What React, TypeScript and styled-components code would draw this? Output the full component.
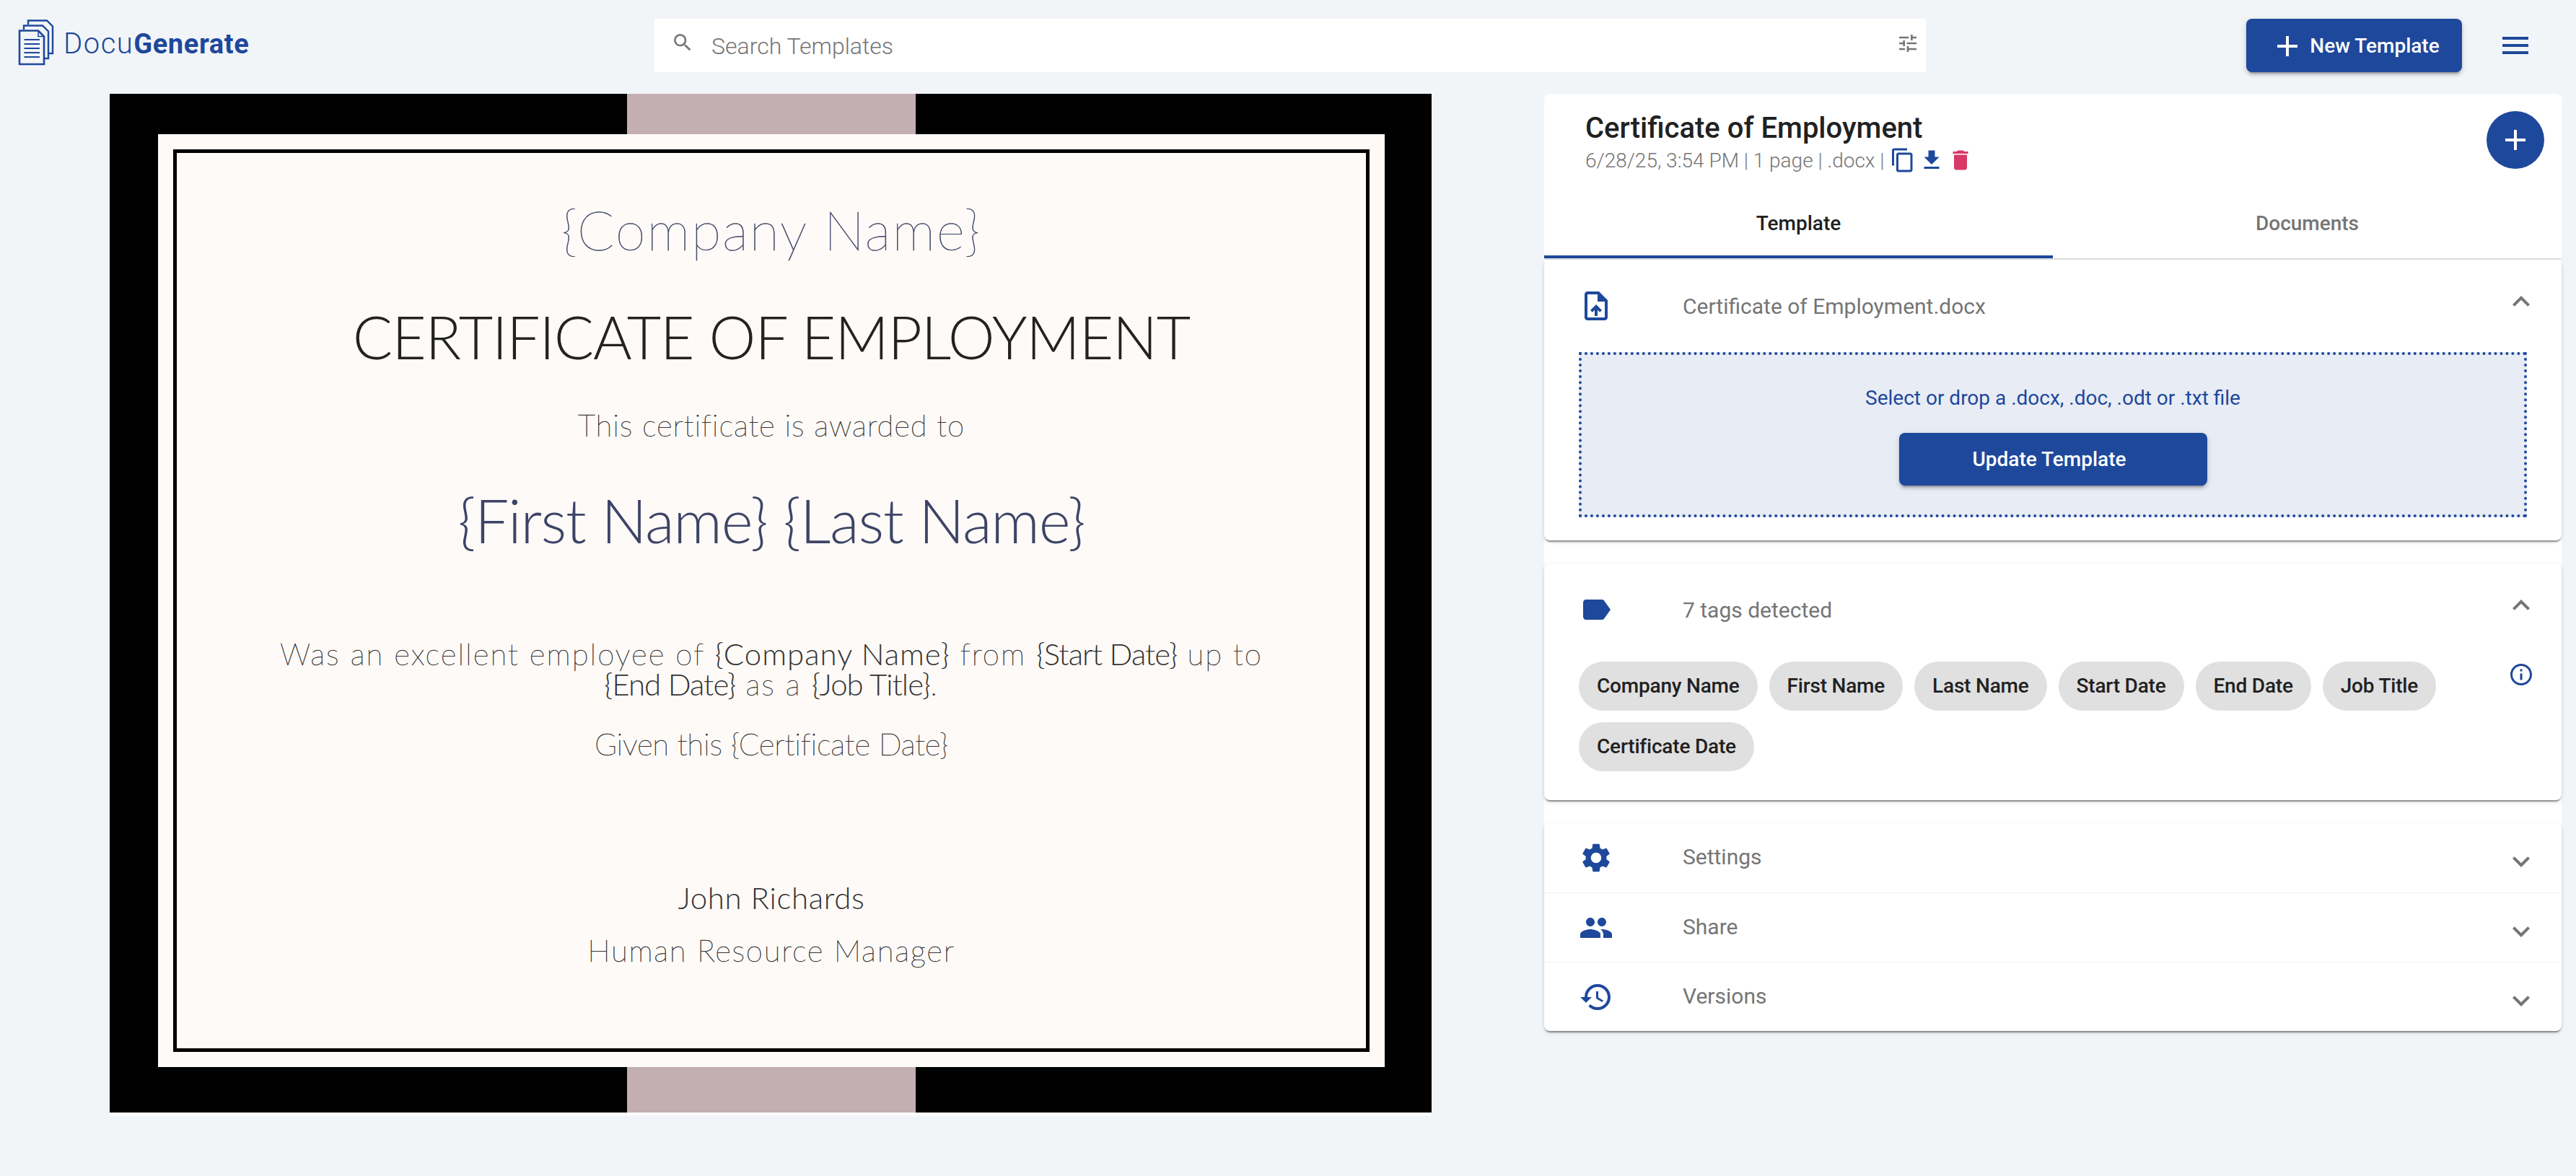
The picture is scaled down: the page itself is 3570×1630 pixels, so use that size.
import React from 'react';
import styled, { createGlobalStyle } from 'styled-components';
import {
  MdAdd, MdMenu, MdSearch, MdTune, MdContentCopy, MdFileDownload, MdDelete, MdUploadFile, MdLabel,
  MdSettings, MdPeople, MdHistory, MdExpandLess, MdExpandMore, MdInfoOutline,
} from 'react-icons/md';

const BLUE = '#1e489b';
const GRAY = '#757575';
const INK = '#212121';
const SLATE = '#3d4467';
const PAGE = '#f2f5f8';

const Global = createGlobalStyle`
  html, body { margin: 0; padding: 0; background: ${PAGE}; }
  body { font-family: Roboto, "Liberation Sans", sans-serif; overflow: hidden; }
  * { box-sizing: border-box; }
`;

const Page = styled.div`
  width: 3570px;
  height: 1630px;
  background: ${PAGE};
  display: flex;
  flex-direction: column;
`;

const Header = styled.header`
  display: flex;
  align-items: center;
  height: 130px;
  padding: 26px 60px 30px 20px;
`;

const Logo = styled.div`
  width: 887px;
  height: 72px;
  flex: none;
  display: flex;
  align-self: flex-start;
  margin-top: -4px;
  gap: 4px;
`;

const LogoText = styled.div`
  display: flex;
  align-items: center;
  padding-top: 6px;
  font-size: 38px;
  line-height: 66px;
  color: ${BLUE};
`;

const LogoThin = styled.span`
  font-weight: 300;
  font-size: 40px;
  letter-spacing: 1.5px;
`;

const LogoBold = styled.span`
  font-weight: 700;
  letter-spacing: 0.6px;
`;

const SearchBar = styled.div`
  width: 1762px;
  height: 74px;
  flex: none;
  background: #fff;
  display: flex;
  align-items: center;
  padding: 0 9px 0 23px;
  color: ${GRAY};
`;

const SearchIcon = styled(MdSearch)`
  width: 32px;
  height: 32px;
  flex: none;
  margin-top: -8px;
`;

const Placeholder = styled.span`
  flex: 1;
  margin: 2px 0 0 24px;
  font-size: 32px;
  font-weight: 300;
  color: ${GRAY};
`;

const TuneIcon = styled(MdTune)`
  width: 32px;
  height: 32px;
  flex: none;
  margin-top: -6px;
`;

const HeaderActions = styled.div`
  margin-left: auto;
  display: flex;
  align-items: center;
  gap: 50px;
`;

const PrimaryButton = styled.button`
  border: 0;
  background: ${BLUE};
  color: #fff;
  font-family: Roboto, sans-serif;
  font-weight: 500;
  font-size: 28px;
  border-radius: 8px;
  box-shadow: 0 6px 2px -4px rgba(0,0,0,.2), 0 4px 4px rgba(0,0,0,.14), 0 2px 10px rgba(0,0,0,.12);
  display: flex;
  align-items: center;
  justify-content: center;
`;

const NewButton = styled(PrimaryButton)`
  width: 299px;
  height: 74px;
  padding: 0 26px 0 28px;
`;

const NewIcon = styled(MdAdd)`
  width: 48px;
  height: 48px;
  flex: none;
  margin: 2px 7px 0 0;
`;

const MenuIcon = styled(MdMenu)`
  width: 48px;
  height: 48px;
  color: ${BLUE};
  display: block;
`;

const Main = styled.main`
  flex: 1;
  display: flex;
  align-items: flex-start;
  padding: 0 20px 0 152px;
  justify-content: space-between;
`;

const Sheet = styled.section`
  width: 1832px;
  height: 1416px;
  background: #fff;
  padding-bottom: 4px;
  flex: none;
  display: flex;
  flex-direction: column;
`;

const Band = styled.div<{ $h: number }>`
  height: ${p => p.$h}px;
  flex: none;
  background: #000;
  display: flex;
  justify-content: center;
`;

const Ribbon = styled.div`
  width: 400px;
  height: 100%;
  margin-left: 2px;
  background: #c3aeb2;
`;

const SheetMiddle = styled.div`
  flex: 1;
  background: #000;
  padding: 0 65px 0 67px;
  display: flex;
`;

const Paper = styled.div`
  flex: 1;
  background: #fefaf7;
  padding: 21px;
  display: flex;
`;

const Frame = styled.div`
  flex: 1;
  border: 5px solid #000;
  display: flex;
  flex-direction: column;
  align-items: center;
  text-align: center;
  font-family: Lato, sans-serif;
`;

const CertLine = styled.div<{ $size: number; $top: number; $lh?: number; $color?: string; $weight?: number; $ls?: number; $stroke?: number }>`
  font-size: ${p => p.$size}px;
  line-height: ${p => p.$lh ?? Math.round(p.$size * 1.2)}px;
  margin-top: ${p => p.$top}px;
  color: ${p => p.$color ?? '#333'};
  font-weight: ${p => p.$weight ?? 100};
  letter-spacing: ${p => p.$ls ?? 0}px;
  -webkit-text-stroke: ${p => p.$stroke ?? 0.5}px currentColor;
  white-space: nowrap;
`;

const Tag = styled.span<{ $ls?: number }>`
  font-weight: 300;
  color: #333;
  letter-spacing: ${p => p.$ls ?? -1}px;
  -webkit-text-stroke: 0;
`;

const Card = styled.aside`
  width: 1410px;
  height: 1299px;
  flex: none;
  background: #fff;
  border-radius: 8px;
`;

const CardHeader = styled.div`
  height: 134px;
  display: flex;
  justify-content: space-between;
  align-items: flex-start;
  padding: 26px 24px 0 57px;
`;

const TitleBlock = styled.div`
  display: flex;
  flex-direction: column;
  gap: 4px;
`;

const Title = styled.h1`
  margin: 0;
  font-size: 40px;
  line-height: 44px;
  font-weight: 500;
  color: ${INK};
`;

const Meta = styled.div`
  display: flex;
  align-items: center;
  height: 36px;
  font-size: 28px;
  font-weight: 300;
  color: ${GRAY};
`;

const MetaText = styled.span`
  margin-right: 7px;
`;

const MetaIcons = styled.div`
  display: flex;
  gap: 4px;
`;

const CopyIcon = styled(MdContentCopy)`
  width: 36px;
  height: 36px;
  color: ${BLUE};
`;

const DownloadIcon = styled(MdFileDownload)`
  width: 36px;
  height: 36px;
  color: ${BLUE};
`;

const DeleteIcon = styled(MdDelete)`
  width: 36px;
  height: 36px;
  color: #d83a68;
`;

const Fab = styled.button`
  width: 80px;
  height: 80px;
  margin-top: -2px;
  border: 0;
  border-radius: 50%;
  background: ${BLUE};
  color: #fff;
  padding: 0;
  display: flex;
  align-items: center;
  justify-content: center;
`;

const FabIcon = styled(MdAdd)`
  width: 48px;
  height: 48px;
`;

const Tabs = styled.div`
  display: flex;
  height: 96px;
  border-bottom: 2px solid #e0e0e0;
`;

const Tab = styled.div<{ $active?: boolean }>`
  flex: 1;
  display: flex;
  align-items: center;
  justify-content: center;
  font-size: 28px;
  font-weight: 500;
  color: ${p => (p.$active ? INK : GRAY)};
  border-bottom: 4px solid ${p => (p.$active ? BLUE : 'transparent')};
`;

const Panel = styled.div<{ $gap?: number }>`
  display: flow-root;
  background: #fff;
  border-radius: 8px;
  margin-bottom: ${p => p.$gap ?? 0}px;
  box-shadow: 0 4px 2px -2px rgba(0,0,0,.3), 0 2px 2px rgba(0,0,0,.14), 0 2px 6px rgba(0,0,0,.12);
`;

const PanelHead = styled.div<{ $h: number; $divider?: boolean }>`
  height: ${p => p.$h}px;
  display: flex;
  align-items: center;
  padding: 0 32px 0 48px;
  border-top: ${p => (p.$divider ? '1px solid #f0f0f0' : '0')};
`;

const LeadIcon = styled.div`
  width: 48px;
  height: 48px;
  flex: none;
  color: ${BLUE};
  font-size: 48px;
  line-height: 0;
`;

const PanelTitle = styled.div<{ $raised?: boolean }>`
  margin-left: 96px;
  margin-top: ${p => (p.$raised ? -3 : 0)}px;
  flex: 1;
  font-size: 30px;
  color: ${GRAY};
`;

const Chevron = styled.div<{ $up?: boolean }>`
  width: 48px;
  height: 48px;
  color: ${GRAY};
  font-size: 48px;
  line-height: 0;
  margin-top: ${p => (p.$up ? -12 : 10)}px;
`;

const Dropzone = styled.div`
  margin: 0 48px 32px;
  height: 229px;
  border: 4px dotted ${BLUE};
  background: #e8ecf5;
  display: flex;
  flex-direction: column;
  align-items: center;
  padding-top: 40px;
`;

const DropText = styled.div`
  font-size: 28px;
  line-height: 40px;
  color: ${BLUE};
`;

const UpdateButton = styled(PrimaryButton)`
  margin-top: 28px;
  width: 427px;
  height: 73px;
  padding: 0 10px 0 0;
`;

const TagsBody = styled.div`
  display: flex;
  justify-content: space-between;
  padding: 0 38px 40px 48px;
  margin-top: 8px;
`;

const Chips = styled.div`
  display: flex;
  flex-wrap: wrap;
  gap: 16px;
  flex: 1;
  padding-right: 40px;
`;

const Chip = styled.div`
  height: 68px;
  padding: 0 25px 2px;
  border-radius: 34px;
  background: #e0e0e0;
  display: flex;
  align-items: center;
  font-size: 28px;
  font-weight: 500;
  letter-spacing: -0.2px;
  color: ${INK};
`;

const InfoIcon = styled(MdInfoOutline)`
  width: 36px;
  height: 36px;
  flex: none;
  color: ${BLUE};
`;

const chips = ['Company Name', 'First Name', 'Last Name', 'Start Date', 'End Date', 'Job Title', 'Certificate Date'];

const LogoMark = () => (
  <svg width="64" height="72" viewBox="0 0 64 72" fill="none">
    <path d="M19 12V6.5H45L53 14.5V52H48" stroke={BLUE} strokeWidth="2.4" />
    <path d="M13 19V13.5H39L47 21.5V59H42" stroke={BLUE} strokeWidth="2.4" />
    <path d="M7 20.5H33L41 28.5V67H7Z" stroke={BLUE} strokeWidth="2.6" fill={PAGE} />
    <path d="M33 20.5V28.5H41" stroke={BLUE} strokeWidth="1.6" />
    <path d="M13.5 33H35M13.5 39H35M13.5 45H35M13.5 51H35M13.5 57H35" stroke={BLUE} strokeWidth="2.2" />
  </svg>
);

const rows = [
  { label: 'Settings', icon: <MdSettings /> },
  { label: 'Share', icon: <MdPeople /> },
  { label: 'Versions', icon: <MdHistory /> },
];

export default function App() {
  return (
    <Page>
      <Global />
      <Header>
        <Logo>
          <LogoMark />
          <LogoText>
            <LogoThin>Docu</LogoThin>
            <LogoBold>Generate</LogoBold>
          </LogoText>
        </Logo>
        <SearchBar>
          <SearchIcon />
          <Placeholder>Search Templates</Placeholder>
          <TuneIcon />
        </SearchBar>
        <HeaderActions>
          <NewButton>
            <NewIcon />
            New Template
          </NewButton>
          <MenuIcon />
        </HeaderActions>
      </Header>
      <Main>
        <Sheet>
          <Band $h={56}><Ribbon /></Band>
          <SheetMiddle>
            <Paper>
              <Frame>
                <CertLine $size={76} $top={60} $color={SLATE} $ls={1.7}>{'{Company Name}'}</CertLine>
                <CertLine $size={82} $top={54} $color="#222" $weight={300} $ls={-1.15} $stroke={0}>CERTIFICATE OF EMPLOYMENT</CertLine>
                <CertLine $size={42} $top={49} $ls={0.85}>This certificate is awarded to</CertLine>
                <CertLine $size={84} $top={56} $color={SLATE} $weight={300} $ls={-1.2} $stroke={0}>{'{First Name} {Last Name}'}</CertLine>
                <CertLine $size={42} $top={114} $lh={42} $ls={2}>
                  Was an excellent employee of <Tag $ls={1}>{'{Company Name}'}</Tag> from <Tag>{'{Start Date}'}</Tag> up to
                  <br />
                  <Tag>{'{End Date}'}</Tag> as a <Tag>{'{Job Title}'}</Tag>.
                </CertLine>
                <CertLine $size={42} $top={37} $ls={-0.2}>{'Given this {Certificate Date}'}</CertLine>
                <CertLine $size={42} $top={163} $color="#333" $weight={300} $ls={0.7} $stroke={0}>John Richards</CertLine>
                <CertLine $size={42} $top={23} $ls={1.7}>Human Resource Manager</CertLine>
              </Frame>
            </Paper>
          </SheetMiddle>
          <Band $h={63}><Ribbon /></Band>
        </Sheet>
        <Card>
          <CardHeader>
            <TitleBlock>
              <Title>Certificate of Employment</Title>
              <Meta>
                <MetaText>6/28/25, 3:54 PM | 1 page | .docx |</MetaText>
                <MetaIcons>
                  <CopyIcon />
                  <DownloadIcon />
                  <DeleteIcon />
                </MetaIcons>
              </Meta>
            </TitleBlock>
            <Fab><FabIcon /></Fab>
          </CardHeader>
          <Tabs>
            <Tab $active>Template</Tab>
            <Tab>Documents</Tab>
          </Tabs>
          <Panel $gap={32}>
            <PanelHead $h={128}>
              <LeadIcon><MdUploadFile /></LeadIcon>
              <PanelTitle>Certificate of Employment.docx</PanelTitle>
              <Chevron $up><MdExpandLess /></Chevron>
            </PanelHead>
            <Dropzone>
              <DropText>Select or drop a .docx, .doc, .odt or .txt file</DropText>
              <UpdateButton>Update Template</UpdateButton>
            </Dropzone>
          </Panel>
          <Panel $gap={32}>
            <PanelHead $h={128}>
              <LeadIcon><MdLabel /></LeadIcon>
              <PanelTitle>7 tags detected</PanelTitle>
              <Chevron $up><MdExpandLess /></Chevron>
            </PanelHead>
            <TagsBody>
              <Chips>
                {chips.map(c => <Chip key={c}>{c}</Chip>)}
              </Chips>
              <InfoIcon />
            </TagsBody>
          </Panel>
          <Panel>
            {rows.map((r, i) => (
              <PanelHead key={r.label} $h={96} $divider={i > 0}>
                <LeadIcon>{r.icon}</LeadIcon>
                <PanelTitle $raised>{r.label}</PanelTitle>
                <Chevron><MdExpandMore /></Chevron>
              </PanelHead>
            ))}
          </Panel>
        </Card>
      </Main>
    </Page>
  );
}
